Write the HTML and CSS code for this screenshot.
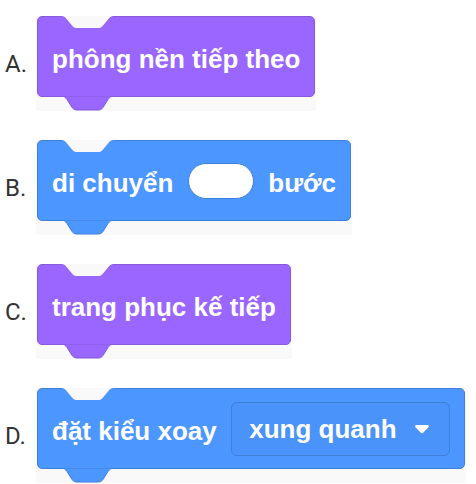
FILE: index.html
```html
<!DOCTYPE html>
<html lang="vi">
<head>
    <meta charset="UTF-8">
    <meta name="viewport" content="width=device-width, initial-scale=1.0">
    <title>Khối lệnh</title>
    <link rel="stylesheet" href="styles.css">
</head>
<body>
    <ul class="choices">
        <li class="choice choice-a">
            <span class="label">A.</span>
            <div class="shot">
                <div class="block looks">
                    <svg class="notch" viewBox="0 0 101 13"><path d="M24 0 C27 0 28.5 1.5 30 3.5 L35 9.5 C36.5 11.5 38 12 40 12 H61 C63 12 64.5 11.5 66 9.5 L71 3.5 C72.5 1.5 74 0 77 0 Z"/></svg>
                    <span class="text">phông nền tiếp theo</span>
                    <svg class="tab" viewBox="0 0 101 15"><path d="M24 0 C27 0 28.5 1.5 30 3.5 L35 11.5 C36.5 13.5 38 14 40 14 H61 C63 14 64.5 13.5 66 11.5 L71 3.5 C72.5 1.5 74 0 77 0 Z"/></svg>
                </div>
            </div>
        </li>
        <li class="choice choice-b">
            <span class="label">B.</span>
            <div class="shot">
                <div class="block motion">
                    <svg class="notch" viewBox="0 0 101 13"><path d="M24 0 C27 0 28.5 1.5 30 3.5 L35 9.5 C36.5 11.5 38 12 40 12 H61 C63 12 64.5 11.5 66 9.5 L71 3.5 C72.5 1.5 74 0 77 0 Z"/></svg>
                    <span class="text">di chuyển</span>
                    <span class="input"></span>
                    <span class="text">bước</span>
                    <svg class="tab" viewBox="0 0 101 15"><path d="M24 0 C27 0 28.5 1.5 30 3.5 L35 11.5 C36.5 13.5 38 14 40 14 H61 C63 14 64.5 13.5 66 11.5 L71 3.5 C72.5 1.5 74 0 77 0 Z"/></svg>
                </div>
            </div>
        </li>
        <li class="choice choice-c">
            <span class="label">C.</span>
            <div class="shot">
                <div class="block looks">
                    <svg class="notch" viewBox="0 0 101 13"><path d="M24 0 C27 0 28.5 1.5 30 3.5 L35 9.5 C36.5 11.5 38 12 40 12 H61 C63 12 64.5 11.5 66 9.5 L71 3.5 C72.5 1.5 74 0 77 0 Z"/></svg>
                    <span class="text">trang phục kế tiếp</span>
                    <svg class="tab" viewBox="0 0 101 15"><path d="M24 0 C27 0 28.5 1.5 30 3.5 L35 11.5 C36.5 13.5 38 14 40 14 H61 C63 14 64.5 13.5 66 11.5 L71 3.5 C72.5 1.5 74 0 77 0 Z"/></svg>
                </div>
            </div>
        </li>
        <li class="choice choice-d">
            <span class="label">D.</span>
            <div class="shot">
                <div class="block motion">
                    <svg class="notch" viewBox="0 0 101 13"><path d="M24 0 C27 0 28.5 1.5 30 3.5 L35 9.5 C36.5 11.5 38 12 40 12 H61 C63 12 64.5 11.5 66 9.5 L71 3.5 C72.5 1.5 74 0 77 0 Z"/></svg>
                    <span class="text">đặt kiểu xoay</span>
                    <span class="dropdown">
                        <span class="text">xung quanh</span>
                        <svg class="arrow" viewBox="0 0 14 9"><path d="M1.5 0 H12.5 C13.8 0 14.4 1.4 13.5 2.3 L8.1 7.8 C7.5 8.4 6.5 8.4 5.9 7.8 L0.5 2.3 C-0.4 1.4 0.2 0 1.5 0 Z"/></svg>
                    </span>
                    <svg class="tab" viewBox="0 0 101 15"><path d="M24 0 C27 0 28.5 1.5 30 3.5 L35 11.5 C36.5 13.5 38 14 40 14 H61 C63 14 64.5 13.5 66 11.5 L71 3.5 C72.5 1.5 74 0 77 0 Z"/></svg>
                </div>
            </div>
        </li>
    </ul>
</body>
</html>
```

FILE: styles.css
```css
body {
    margin: 0;
    padding: 0;
    background: #fff;
    font-family: Roboto, "Liberation Sans", sans-serif;
}

.choices {
    list-style: none;
    margin: 0;
    padding: 16px 0 0 5px;
    display: flex;
    flex-direction: column;
    gap: 29px;
}

.choice {
    display: flex;
    align-items: center;
}

.label {
    width: 31px;
    font-size: 24px;
    color: #333;
}

.shot {
    background: #f9f9f9;
    padding: 0 1px 14px;
}

.block {
    position: relative;
    height: 81px;
    box-sizing: border-box;
    padding: 0 14px;
    display: flex;
    align-items: center;
    gap: 14.5px;
    border-radius: 5px;
    border: 1px solid;
    font-family: "Liberation Sans", Arial, sans-serif;
    font-weight: bold;
    font-size: 26px;
    color: #fff;
}

.block > .text {
    padding-top: 6px;
}

.looks {
    background: #9966ff;
    border-color: #855cd6;
}

.motion {
    background: #4c97ff;
    border-color: #4280d7;
}

.notch {
    position: absolute;
    left: -1px;
    top: -1px;
    width: 101px;
    height: 13px;
}

.notch path {
    fill: #f9f9f9;
}

.tab {
    position: absolute;
    left: -1px;
    top: 100%;
    width: 101px;
    height: 15px;
}

.looks .tab path {
    fill: #9966ff;
    stroke: #855cd6;
}

.motion .tab path {
    fill: #4c97ff;
    stroke: #4280d7;
}

.input {
    width: 66px;
    height: 36px;
    box-sizing: border-box;
    border-radius: 18px;
    background: #fff;
    border: 1px solid #3d7fd9;
}

.dropdown {
    height: 54px;
    box-sizing: border-box;
    padding: 2px 20px 0 17px;
    display: flex;
    align-items: center;
    gap: 18px;
    border-radius: 6px;
    border: 1px solid #3d7fd9;
    background: #4a93fb;
}

.arrow {
    width: 14px;
    height: 9px;
    fill: #fff;
}
```
